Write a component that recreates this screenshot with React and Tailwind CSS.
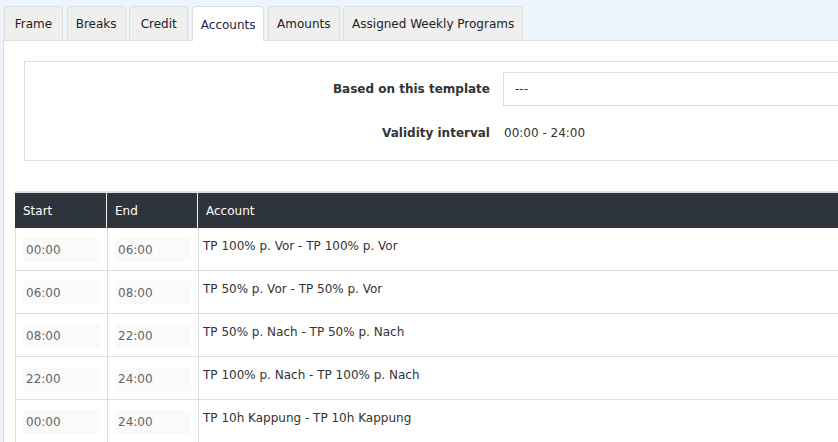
import React from "react";

const tabs = ["Frame", "Breaks", "Credit", "Accounts", "Amounts", "Assigned Weekly Programs"];

const rows = [
  ["00:00", "06:00", "TP 100% p. Vor - TP 100% p. Vor"],
  ["06:00", "08:00", "TP 50% p. Vor - TP 50% p. Vor"],
  ["08:00", "22:00", "TP 50% p. Nach - TP 50% p. Nach"],
  ["22:00", "24:00", "TP 100% p. Nach - TP 100% p. Nach"],
  ["00:00", "24:00", "TP 10h Kappung - TP 10h Kappung"],
];

function TimeCell({ value }) {
  return (
    <div className="border-r border-[#dddddd] px-[7px] pt-[10px] pb-[9px]">
      <div className="h-[24px] bg-[#fafafa] pl-[3px] leading-[24px] text-[#666666]">{value}</div>
    </div>
  );
}

export default function App() {
  return (
    <div
      className="h-[442px] w-[838px] overflow-hidden bg-[#eef4fb] text-[12px] text-[#333333]"
      style={{ fontFamily: '"DejaVu Sans", Verdana, sans-serif' }}
    >
      {/* tab strip */}
      <div className="flex items-end gap-[3.6px] pl-[4px] pt-[6px]">
        {tabs.map((t) =>
          t === "Accounts" ? (
            <div
              key={t}
              className="relative z-10 -mb-px flex h-[35px] min-w-[59px] items-center justify-center rounded-t-[4px] border border-b-0 border-[#dddddd] bg-white px-[8px] pt-[2px] text-[#222244]"
            >
              {t}
            </div>
          ) : (
            <div
              key={t}
              className="flex h-[34px] min-w-[59px] items-center justify-center rounded-t-[4px] border border-b-0 border-[#dddddd] bg-[#efefef] px-[8px] text-[#222222]"
            >
              {t}
            </div>
          )
        )}
      </div>

      {/* panel */}
      <div className="ml-[3px] h-full border-l border-t border-[#dddddd] bg-white pl-[11px] pt-[20px]">
        <div className="ml-[9px] flex flex-col border border-r-0 border-[#dddddd] pb-[18px] pt-[10px]">
          <div className="flex items-center">
            <div className="w-[478px] pr-[13px] text-right font-bold">Based on this template</div>
            <div className="flex h-[34px] flex-1 items-center border border-r-0 border-[#dddddd] pl-[11px]">---</div>
          </div>
          <div className="mt-[18px] flex items-center">
            <div className="w-[478px] pr-[13px] text-right font-bold">Validity interval</div>
            <div className="pl-[1px]">00:00 - 24:00</div>
          </div>
        </div>

        {/* accounts table */}
        <div className="mt-[30px] border-t-2 border-[#dddddd]">
          <div className="grid h-[35px] grid-cols-[92px_91px_1fr] bg-[#2e343b] text-white">
            <div className="flex items-center border-r border-[#eeeeee] pl-[8px]">Start</div>
            <div className="flex items-center border-r border-[#eeeeee] pl-[8px]">End</div>
            <div className="flex items-center pl-[8px]">Account</div>
          </div>
          {rows.map(([s, e, a], i) => (
            <div
              key={i}
              className="grid h-[43px] grid-cols-[92px_91px_1fr] border-b border-l border-[#dddddd]"
            >
              <TimeCell value={s} />
              <TimeCell value={e} />
              <div className="pl-[4px] pt-[9px]">{a}</div>
            </div>
          ))}
        </div>
      </div>
    </div>
  );
}
